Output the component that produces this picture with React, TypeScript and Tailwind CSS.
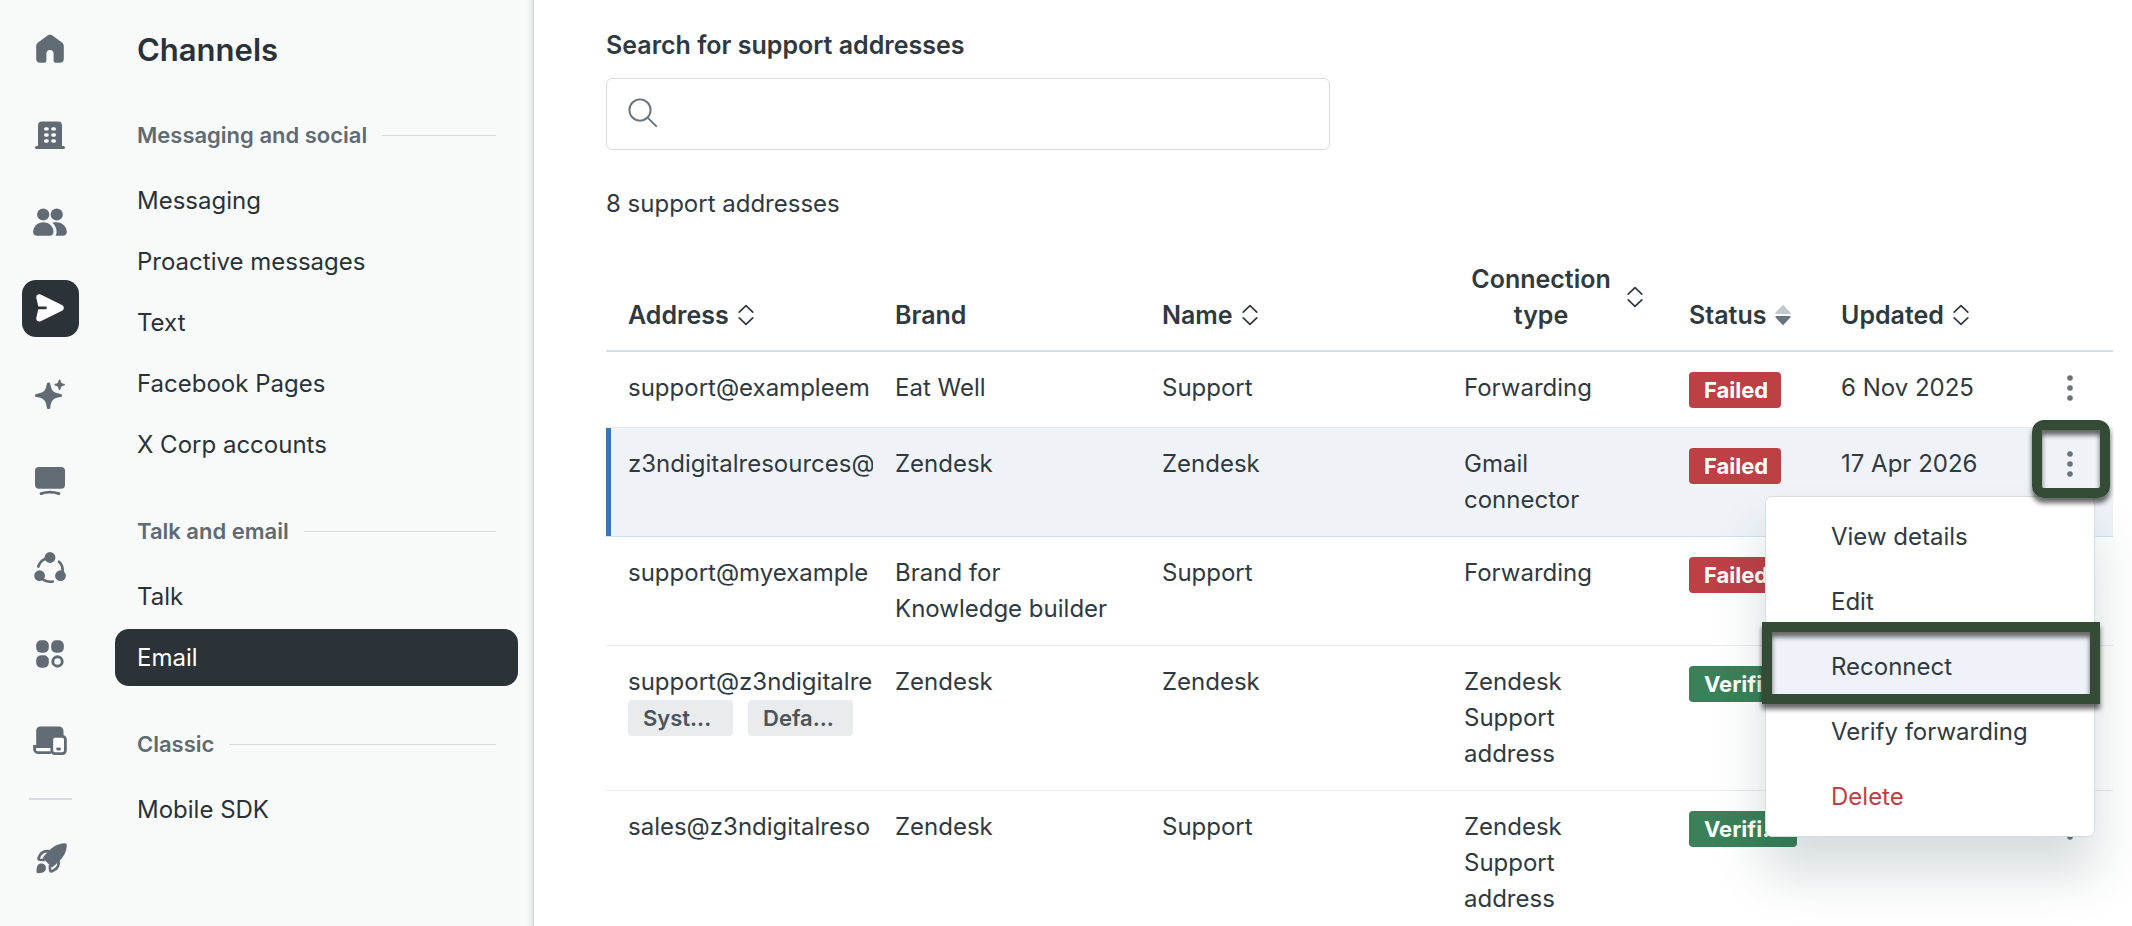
import React, { useState } from 'react';
import clsx from 'clsx';

type IconProps = { className?: string };

const HomeIcon = () => (
  <svg viewBox="0 0 36 36" className="size-9" fill="currentColor" aria-hidden="true">
    <path d="M15.6 4.600a4 4 0 0 1 4.800 0l9.600 7a4.400 4.400 0 0 1 1.800 3.500v12.600a4 4 0 0 1-4 4h-4.200a2 2 0 0 1-2-2v-7.100a3.600 3.600 0 0 0-7.200 0v7.100a2 2 0 0 1-2 2H8.200a4 4 0 0 1-4-4V15.100a4.400 4.400 0 0 1 1.800-3.500z" />
  </svg>
);

const BuildingIcon = () => (
  <svg viewBox="0 0 36 36" className="size-9" fill="currentColor" aria-hidden="true">
    <path d="M10 4.500h16a4 4 0 0 1 4 4V29h1.500a1.500 1.500 0 0 1 0 3h-27a1.500 1.500 0 0 1 0-3H6V8.500a4 4 0 0 1 4-4z" />
    <g fill="#f8faf9">
      <rect x="12" y="10.200" width="4.800" height="3.400" rx="1.600" />
      <rect x="19.200" y="10.200" width="4.800" height="3.400" rx="1.600" />
      <rect x="12" y="16.300" width="4.800" height="3.400" rx="1.600" />
      <rect x="19.200" y="16.300" width="4.800" height="3.400" rx="1.600" />
      <rect x="12" y="22.300" width="4.800" height="3.400" rx="1.600" />
      <rect x="19.200" y="22.300" width="4.800" height="3.400" rx="1.600" />
    </g>
  </svg>
);

const PeopleIcon = () => (
  <svg viewBox="0 0 36 36" className="size-9" fill="currentColor" aria-hidden="true">
    <circle cx="11.2" cy="10.500" r="6.100" />
    <circle cx="24.700" cy="10.500" r="6.100" />
    <path d="M11.300 18.200c6 0 10.200 4.700 10.200 9.800 0 2.300-1.600 3.700-3.800 3.700H4.900c-2.200 0-3.800-1.400-3.800-3.700 0-5.100 4.200-9.800 10.200-9.800z" />
    <path d="M20.500 18.700c1.300-.4 2.700-.5 4-.5 6 0 10.300 4.700 10.300 9.800 0 2.300-1.600 3.700-3.800 3.700h-7.400c.7-1.100 1-2.300 1-3.700 0-3.600-1.500-6.900-4.100-9.300z" />
  </svg>
);

const SendIcon = () => (
  <svg viewBox="0 0 36 36" className="size-9" fill="currentColor" aria-hidden="true">
    <path d="M8.700 4.500 30 14.900c2.400 1.200 2.400 4.700 0 5.900L8.700 31.200c-2.400 1.200-5-.8-4.400-3.400l2-8.600h7.200a1.400 1.400 0 0 0 0-2.800H6.300l-2-8.500c-.6-2.600 2-4.600 4.400-3.400z" />
  </svg>
);

const SparkleIcon = () => (
  <svg viewBox="0 0 36 36" className="size-9" fill="currentColor" aria-hidden="true">
    <path d="M16.500 5.500c1 0 1.600.6 1.800 1.600 1 6.500 2.800 8.700 10.200 9.800 1 .2 1.600.8 1.600 1.600s-.6 1.500-1.600 1.600c-7.400 1.100-9.200 3.400-10.200 10.300-.2 1-.8 1.600-1.800 1.600s-1.600-.6-1.700-1.600c-1-6.900-2.900-9.200-10.200-10.300-1-.1-1.600-.8-1.600-1.600s.6-1.400 1.600-1.600c7.300-1.100 9.200-3.300 10.200-9.800.1-1 .7-1.600 1.700-1.600z" />
    <path d="M27.600 2.500c.6 0 .9.400 1 .9.300 2.300 1.100 3 3.400 3.400.6.100.9.400.9.900s-.3.800-.9.900c-2.300.4-3.100 1.200-3.400 3.500-.1.500-.4.900-1 .9s-.9-.4-1-.9c-.3-2.300-1.100-3.100-3.400-3.500-.5-.1-.8-.4-.8-.9s.3-.8.800-.9c2.300-.4 3.100-1.100 3.400-3.400.1-.5.400-.9 1-.9z" />
  </svg>
);

const MonitorIcon = () => (
  <svg viewBox="0 0 36 36" className="size-9" fill="currentColor" aria-hidden="true">
    <rect x="3" y="4" width="30" height="21.700" rx="4" />
    <path d="M9 30.600c5.500-1.900 12.500-1.900 18 0" fill="none" stroke="currentColor" strokeWidth="2.800" strokeLinecap="round" />
  </svg>
);

const NodesIcon = () => (
  <svg viewBox="0 0 36 36" className="size-9" fill="currentColor" aria-hidden="true">
    <circle cx="18" cy="7.500" r="5.400" />
    <circle cx="7.600" cy="25.700" r="5.400" />
    <circle cx="28.500" cy="25.700" r="5.400" />
    <g fill="none" stroke="currentColor" strokeWidth="2.700" strokeLinecap="round">
      <path d="M6.300 16.500c1.300-4.200 4.200-7 8.200-8.300" />
      <path d="M27 11.700c2.700 2.400 4 6.300 3.500 10.300" />
      <path d="M11.500 29.800c2.800 1.700 6 2.300 9.300 1.700" />
    </g>
  </svg>
);

const AppsIcon = () => (
  <svg viewBox="0 0 36 36" className="size-9" fill="currentColor" aria-hidden="true">
    <rect x="4.200" y="4.200" width="12.600" height="12.600" rx="5" />
    <rect x="19.200" y="4.200" width="12.600" height="12.600" rx="5" />
    <rect x="4.200" y="19.200" width="12.600" height="12.600" rx="5" />
    <circle cx="25.500" cy="25.500" r="4.700" fill="none" stroke="currentColor" strokeWidth="2.900" />
  </svg>
);

const DevicesIcon = () => (
  <svg viewBox="0 0 36 36" className="size-9" fill="currentColor" aria-hidden="true">
    <path d="M8.500 3.500H27A4.500 4.500 0 0 1 31.500 8v6H22a3 3 0 0 0-3 3v7.500H4.200V8a4.500 4.500 0 0 1 4.300-4.500z" />
    <path d="M19 23.500H2.500v2.200a4 4 0 0 0 4 4H19" fill="#fff" stroke="currentColor" strokeWidth="2.800" />
    <rect x="19.800" y="13.400" width="13.600" height="17.200" rx="3" fill="#fff" stroke="currentColor" strokeWidth="2.800" />
    <rect x="24.200" y="24.600" width="4.800" height="2.800" rx="1.400" />
  </svg>
);

const RocketIcon = () => (
  <svg viewBox="0 0 36 36" className="size-9" fill="currentColor" aria-hidden="true">
    <path d="M33 3.300c1 0 1.800.7 1.800 1.800-.2 7.900-4.300 14.500-14.800 22.400L10.600 18C18.500 7.500 25 3.500 33 3.300z" />
    <path d="M17.500 11.300c-4.300-.6-8 .5-9.900 4.600l-1 2.200c-.4 1 .1 1.700 1.200 1.700l5 .2M26.600 20.300c.6 4.500-.6 7.800-4.600 9.900l-2.200 1.100c-1 .4-1.700-.1-1.700-1.200l-.3-5" fill="none" stroke="currentColor" strokeWidth="2.600" strokeLinejoin="round" />
    <path d="M9.300 23.500c2.600 0 4.600 2 4.600 4.600 0 3.200-2.300 5.200-7.700 5.200-1.200 0-1.700-.6-1.700-1.700 0-5.500 1.600-8.100 4.800-8.100z" />
  </svg>
);

const SearchIcon = ({ className }: IconProps) => (
  <svg viewBox="0 0 30 30" className={className} fill="none" stroke="currentColor" strokeWidth="1.900" strokeLinecap="round" aria-hidden="true">
    <circle cx="12" cy="12" r="10.600" />
    <path d="m19.600 19.600 8.600 8.600" />
  </svg>
);

const SortIcon = ({ active }: { active?: boolean }) =>
  active ? (
    <svg viewBox="0 0 18 22" className="h-[22px] w-[18px] shrink-0" aria-hidden="true">
      <path d="M8.200 1.500a1 1 0 0 1 1.600 0l6.600 7a.9.9 0 0 1-.7 1.500H2.300a.9.9 0 0 1-.7-1.500z" fill="#c2c8cc" />
      <path d="M8.200 20.500a1 1 0 0 0 1.600 0l6.600-7a.9.9 0 0 0-.7-1.500H2.300a.9.9 0 0 0-.7 1.500z" fill="#68737d" />
    </svg>
  ) : (
    <svg viewBox="0 0 18 22" className="h-[22px] w-[18px] shrink-0" fill="none" stroke="currentColor" strokeWidth="1.700" strokeLinecap="round" strokeLinejoin="round" aria-hidden="true">
      <path d="M2.200 8.200 9 1.600l6.800 6.600M2.200 13.800 9 20.400l6.800-6.600" />
    </svg>
  );

const DotsIcon = () => (
  <svg viewBox="0 0 8 28" className="h-7 w-2" fill="currentColor" aria-hidden="true">
    <circle cx="4" cy="4" r="2.800" />
    <circle cx="4" cy="14" r="2.800" />
    <circle cx="4" cy="24" r="2.800" />
  </svg>
);

const railItems = [
  { id: 'home', label: 'Home', Icon: HomeIcon },
  { id: 'account', label: 'Account', Icon: BuildingIcon },
  { id: 'people', label: 'People', Icon: PeopleIcon },
  { id: 'channels', label: 'Channels', Icon: SendIcon },
  { id: 'ai', label: 'AI', Icon: SparkleIcon },
  { id: 'workspaces', label: 'Workspaces', Icon: MonitorIcon },
  { id: 'rules', label: 'Objects and rules', Icon: NodesIcon },
  { id: 'apps', label: 'Apps and integrations', Icon: AppsIcon },
  { id: 'devices', label: 'Devices', Icon: DevicesIcon },
];

const navSections = [
  { title: 'Messaging and social', items: ['Messaging', 'Proactive messages', 'Text', 'Facebook Pages', 'X Corp accounts'] },
  { title: 'Talk and email', items: ['Talk', 'Email'] },
  { title: 'Classic', items: ['Mobile SDK'] },
];

type Status = 'failed' | 'verified';

interface SupportAddress {
  address: string;
  tags?: string[];
  brand: string;
  name: string;
  connection: string;
  status: Status;
  updated: string;
}

const addresses: SupportAddress[] = [
  { address: 'support@exampleem', brand: 'Eat Well', name: 'Support', connection: 'Forwarding', status: 'failed', updated: '6 Nov 2025' },
  { address: 'z3ndigitalresources@', brand: 'Zendesk', name: 'Zendesk', connection: 'Gmail connector', status: 'failed', updated: '17 Apr 2026' },
  { address: 'support@myexample', brand: 'Brand for Knowledge builder', name: 'Support', connection: 'Forwarding', status: 'failed', updated: '16 Jul 2024' },
  { address: 'support@z3ndigitalre', tags: ['Syst...', 'Defa...'], brand: 'Zendesk', name: 'Zendesk', connection: 'Zendesk Support address', status: 'verified', updated: '16 Jul 2024' },
  { address: 'sales@z3ndigitalreso', brand: 'Zendesk', name: 'Support', connection: 'Zendesk Support address', status: 'verified', updated: '16 Jul 2024' },
];

const menuItems = ['View details', 'Edit', 'Reconnect', 'Verify forwarding', 'Delete'];

const StatusBadge = ({ status }: { status: Status }) => (
  <span
    className={clsx(
      'block h-9 rounded-[4px] px-[15px] text-[22px] leading-9 font-bold text-white',
      status === 'failed' ? 'w-[92px] bg-[#bd4045]' : 'w-[108px] bg-[#3a8058]'
    )}
  >
    {status === 'failed' ? 'Failed' : 'Verifi...'}
  </span>
);

// Green frame drawn around the step the reader should click
const Highlight = ({ className }: IconProps) => (
  <span
    aria-hidden="true"
    className={clsx(
      'pointer-events-none absolute z-20 border-[10px] border-[#344b35] shadow-[0_5px_5px_rgba(0,0,0,0.6),inset_0_5px_5px_rgba(0,0,0,0.6)]',
      className
    )}
  />
);

const RowMenu = () => (
  <ul role="menu" className="absolute top-[68px] right-[18px] z-10 w-[330px] rounded-[7px] border border-[#d8dcde] bg-white py-[7px] shadow-[0_36px_52px_rgba(23,60,65,0.18)]">
    {menuItems.map((item) => (
      <li key={item} role="none" className="relative">
        <button
          role="menuitem"
          className={clsx(
            'block w-full pl-[65px] text-left leading-[65px]',
            item === 'Delete' && 'text-[#bd4045]',
            item === 'Reconnect' && 'bg-[#eff3f9]'
          )}
        >
          {item}
        </button>
        {item === 'Reconnect' && <Highlight className="-top-3 -right-1.5 -bottom-[5px] -left-1" />}
      </li>
    ))}
  </ul>
);

const Sidebar = () => {
  const [active, setActive] = useState('Email');

  return (
    <aside className="flex shrink-0 border-r border-[#d3d7db] bg-[#f8faf9] text-[#293239] shadow-[inset_-7px_0_6px_-6px_rgba(0,0,0,0.14)]">
      {/* Icon rail */}
      <div className="flex w-[100px] flex-col items-center gap-[29px] pt-5 text-[#616b73]">
        <div className="flex h-[749px] flex-col justify-between">
          {railItems.map(({ id, label, Icon }) => (
            <button
              key={id}
              aria-label={label}
              className={clsx('flex size-[57px] items-center justify-center rounded-[14px]', id === 'channels' && 'bg-[#2b3238] text-white')}
            >
              <Icon />
            </button>
          ))}
        </div>
        <hr className="w-[43px] border-t-2 border-[#d8dcde]" />
        <button aria-label="Getting started" className="flex size-[57px] items-center justify-center">
          <RocketIcon />
        </button>
      </div>

      {/* Section navigation */}
      <nav className="w-[433px] px-[15px] pt-[30px]">
        <h1 className="px-[22px] text-[31px] leading-10 font-semibold">Channels</h1>
        <div className="flex flex-col gap-[42px] pt-[49px]">
          {navSections.map((section) => (
            <section key={section.title}>
              <h2 className="flex items-center gap-[15px] px-[22px] text-[22px] leading-8 font-semibold text-[#5f6a72]">
                {section.title}
                <span className="h-px flex-1 bg-[#d8dcde]" />
              </h2>
              <ul className="flex flex-col gap-1 pt-[21px]">
                {section.items.map((item) => (
                  <li key={item}>
                    <a
                      href="#"
                      onClick={() => setActive(item)}
                      className={clsx('block rounded-[14px] px-[22px] leading-[57px]', active === item && 'bg-[#2b3238] text-white')}
                    >
                      {item}
                    </a>
                  </li>
                ))}
              </ul>
            </section>
          ))}
        </div>
      </nav>
    </aside>
  );
};

export default function App() {
  const [query, setQuery] = useState('');
  const selected = 1;

  const th = 'pr-[11px] pt-[39px] pb-[17px] align-bottom text-[25px] leading-9 font-semibold text-left border-b-2 border-[#d8dcde]';

  return (
    <div className="flex h-screen overflow-hidden bg-white font-[Inter,'Liberation_Sans',sans-serif] text-[24px] leading-9 text-[#2f3941]">
      <Sidebar />

      <main className="min-w-0 flex-1 pt-[27px] pr-[19px] pl-[72px]">
        <label htmlFor="search" className="block text-[25px] leading-9 font-semibold">
          Search for support addresses
        </label>
        <div className="relative mt-[15px] w-[724px] max-w-full">
          <SearchIcon className="absolute top-5 left-[22px] size-[30px] text-[#68737d]" />
          <input
            id="search"
            type="text"
            value={query}
            onChange={(e) => setQuery(e.target.value)}
            className="block h-[72px] w-full rounded-md border border-[#d8dcde] pr-5 pl-16 outline-none"
          />
        </div>
        <p className="mt-9">8 support addresses</p>

        <table className="w-full table-fixed border-separate border-spacing-0">
          <colgroup>
            <col className="w-[278px]" />
            <col className="w-[267px]" />
            <col className="w-[302px]" />
            <col className="w-[225px]" />
            <col className="w-[152px]" />
            <col className="w-[197px]" />
            <col className="w-[86px]" />
          </colgroup>
          <thead>
            <tr>
              <th className={clsx(th, 'pl-[22px]')}>
                <button className="flex items-center gap-2">Address <SortIcon /></button>
              </th>
              <th className={clsx(th, 'pl-[11px]')}>Brand</th>
              <th className={clsx(th, 'pl-[11px]')}>
                <button className="flex items-center gap-2">Name <SortIcon /></button>
              </th>
              <th className={clsx(th, 'pl-[11px]')}>
                <button className="flex w-[180px] items-center gap-2">
                  <span className="flex-1 text-center">Connection type</span>
                  <SortIcon />
                </button>
              </th>
              <th className={clsx(th, 'pl-[11px]')}>
                <button className="flex items-center gap-2">Status <SortIcon active /></button>
              </th>
              <th className={clsx(th, 'pl-[11px]')}>
                <button className="flex items-center gap-2">Updated <SortIcon /></button>
              </th>
              <th className={th} aria-label="Actions" />
            </tr>
          </thead>
          <tbody>
            {addresses.map((row, i) => {
              const isSelected = i === selected;
              const cell = clsx('pr-[11px] align-top border-b', isSelected ? 'bg-[#eff3f8] border-[#cee2f2]' : 'border-[#e9ebed]');
              const td = clsx(cell, 'py-[18px] pl-[11px]');
              return (
                <tr key={row.address}>
                  <td className={clsx(cell, 'py-[18px] pl-[22px]', isSelected && 'shadow-[inset_5px_0_0_#3b74b8]')}>
                    <div className="overflow-hidden whitespace-nowrap">{row.address}</div>
                    {row.tags && (
                      <div className="flex gap-[15px]">
                        {row.tags.map((tag) => (
                          <span key={tag} className="h-9 w-[105px] rounded-[4px] bg-[#e9ebed] px-[15px] text-[22px] leading-9 font-semibold text-[#49545c]">
                            {tag}
                          </span>
                        ))}
                      </div>
                    )}
                  </td>
                  <td className={td}>
                    <div className="max-w-[230px]">{row.brand}</div>
                  </td>
                  <td className={td}>{row.name}</td>
                  <td className={td}>
                    <div className="max-w-[170px]">{row.connection}</div>
                  </td>
                  <td className={clsx(cell, 'pt-5 pb-4 pl-[11px]')}>
                    <StatusBadge status={row.status} />
                  </td>
                  <td className={clsx(td, 'whitespace-nowrap')}>{row.updated}</td>
                  <td className={clsx(cell, 'relative pt-4 pb-[19px]')}>
                    <button aria-label={`Actions for ${row.address}`} className="mr-3 ml-auto flex size-10 items-center justify-center text-[#68737d]">
                      <DotsIcon />
                    </button>
                    {isSelected && (
                      <>
                        <RowMenu />
                        <Highlight className="-top-2 right-[3px] size-[78px] rounded-[12px]" />
                      </>
                    )}
                  </td>
                </tr>
              );
            })}
          </tbody>
        </table>
      </main>
    </div>
  );
}
